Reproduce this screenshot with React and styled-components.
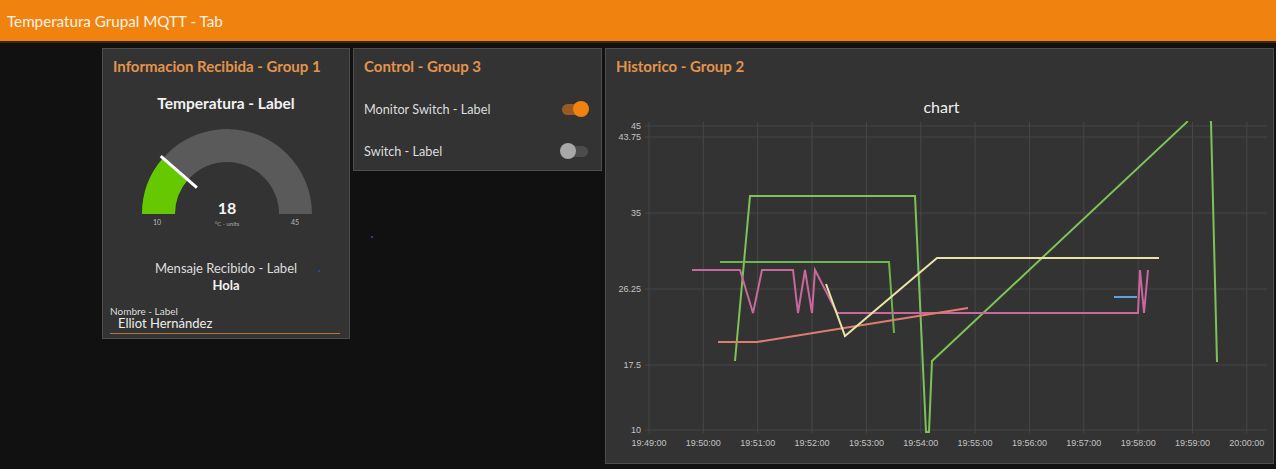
import React from "react";
import styled, { createGlobalStyle } from "styled-components";

const ORANGE = "#f0820f";
const TITLE_COLOR = "#e3944c";
const CARD_BG = "#333333";
const CARD_BORDER = "#4d4d4d";
const FONT = "Lato, 'Liberation Sans', sans-serif";

const GlobalStyle = createGlobalStyle`
    body {
        margin: 0;
        background: #111111;
        font-family: ${FONT};
        color: #dddddd;
    }
`;

const Page = styled.div`
    width: 1276px;
    height: 469px;
    overflow: hidden;
    position: relative;
`;

const Toolbar = styled.header`
    height: 41px;
    background: ${ORANGE};
    border-bottom: 2px solid #3b2612;
    display: flex;
    align-items: center;
    padding-left: 7px;
    font-size: 15.2px;
    color: #fff3e4;
`;

const Main = styled.main`
    display: flex;
    align-items: flex-start;
    gap: 3px;
    padding: 5px 0 0 102px;
`;

const Card = styled.section`
    position: relative;
    box-sizing: border-box;
    width: ${p => p.$w}px;
    height: ${p => p.$h}px;
    background: ${CARD_BG};
    border: 1px solid ${CARD_BORDER};
    display: flex;
    flex-direction: column;
`;

const CardTitle = styled.h2`
    margin: 0;
    height: 34px;
    flex: none;
    display: flex;
    align-items: center;
    padding-left: 10px;
    font-size: 15px;
    font-weight: 700;
    color: ${TITLE_COLOR};
`;

const WidgetLabel = styled.div`
    text-align: center;
    font-size: ${p => p.$size || 13}px;
    font-weight: ${p => (p.$bold ? 700 : 400)};
    color: ${p => (p.$bold ? "#f2f2f2" : "#dddddd")};
    line-height: 17px;
`;

const GaugeBox = styled.div`
    margin-top: 6px;
    height: 120px;
`;

const MessageBox = styled.div`
    margin-top: 22px;
    display: flex;
    flex-direction: column;
`;

const TextInput = styled.div`
    margin: 12px 9px 0 7px;
    border-bottom: 1px solid #b07840;
    padding-bottom: 3px;
`;

const InputLabel = styled.div`
    font-size: 10px;
    line-height: 10px;
    color: #dddddd;
`;

const InputValue = styled.div`
    font-size: 13px;
    line-height: 14px;
    padding-left: 8px;
    color: #eeeeee;
`;

const SwitchList = styled.div`
    padding-top: 5px;
    display: flex;
    flex-direction: column;
`;

const SwitchRow = styled.div`
    height: 42px;
    display: flex;
    align-items: center;
    justify-content: space-between;
    padding: 0 13px 0 10px;
    font-size: 12.7px;
    color: #dddddd;
`;

const Track = styled.div`
    position: relative;
    width: 26px;
    height: 11px;
    border-radius: 6px;
    background: ${p => (p.$on ? "#9a5a22" : "#4c4c4c")};
`;

const Thumb = styled.div`
    position: absolute;
    top: -2.5px;
    ${p => (p.$on ? "right: -1px;" : "left: -2px;")}
    width: 16px;
    height: 16px;
    border-radius: 50%;
    background: ${p => (p.$on ? ORANGE : "#a8a8a8")};
`;

const Speck = styled.span`
    position: absolute;
    left: ${p => p.$x}px;
    top: ${p => p.$y}px;
    width: 2px;
    height: 2px;
    border-radius: 1px;
    background: #2a4fc0;
`;

const ChartTitle = styled.div`
    box-sizing: border-box;
    height: 36px;
    padding: 10px 0 0 4px;
    display: flex;
    align-items: center;
    justify-content: center;
    font-size: 16px;
    color: #f0f0f0;
`;

function Switch({ label, on }) {
    return (
        <SwitchRow>
            <span>{label}</span>
            <Track $on={on}>
                <Thumb $on={on} />
            </Track>
        </SwitchRow>
    );
}

// gauge drawn in page coordinates, centre at (227, 214)
function Gauge() {
    const cx = 227, cy = 214, R = 85, r = 52;
    const frac = (18 - 10) / (45 - 10);
    const a = frac * Math.PI;
    const ox = cx - R * Math.cos(a), oy = cy - R * Math.sin(a);
    const ix = cx - r * Math.cos(a), iy = cy - r * Math.sin(a);
    const n1x = cx - 88 * Math.cos(a), n1y = cy - 88 * Math.sin(a);
    const n2x = cx - 40 * Math.cos(a), n2y = cy - 40 * Math.sin(a);
    return (
        <svg width="246" height="120" viewBox="103 118 246 120">
            <path d={`M ${cx - R} ${cy} A ${R} ${R} 0 0 1 ${cx + R} ${cy} L ${cx + r} ${cy} A ${r} ${r} 0 0 0 ${cx - r} ${cy} Z`} fill="#5a5a5a" />
            <path d={`M ${cx - R} ${cy} A ${R} ${R} 0 0 1 ${ox} ${oy} L ${ix} ${iy} A ${r} ${r} 0 0 0 ${cx - r} ${cy} Z`} fill="#66c800" />
            <line x1={n1x} y1={n1y} x2={n2x} y2={n2y} stroke="#ffffff" strokeWidth="3" />
            <text x={cx} y={cy} textAnchor="middle" fontSize="16" fontWeight="700" fill="#f4f4f4" fontFamily={FONT}>18</text>
            <text x={cx} y={cy + 12} textAnchor="middle" fontSize="6" fill="#aaaaaa" fontFamily={FONT}>°C - units</text>
            <text x={157} y={cy + 11} textAnchor="middle" fontSize="7" fill="#bbbbbb" fontFamily={FONT}>10</text>
            <text x={295} y={cy + 11} textAnchor="middle" fontSize="7" fill="#bbbbbb" fontFamily={FONT}>45</text>
        </svg>
    );
}

const X_TICKS = ["19:49:00", "19:50:00", "19:51:00", "19:52:00", "19:53:00", "19:54:00",
    "19:55:00", "19:56:00", "19:57:00", "19:58:00", "19:59:00", "20:00:00"];
const Y_TICKS = [[45, 126], [43.75, 137], [35, 213], [26.25, 289], [17.5, 365], [10, 430]];

const SERIES = [
    { color: "#7cc455", pts: [[735, 361], [750, 196], [915, 196], [926, 432], [929, 432], [932, 361], [1187, 122], [1199, 90], [1211, 122], [1217, 362]] },
    { color: "#6cb64c", pts: [[720, 262], [889, 262], [894, 333]] },
    { color: "#c8689c", pts: [[692, 270], [740, 270], [753, 313], [762, 270], [793, 270], [798, 313], [805, 270], [812, 313], [815, 270], [837, 313], [1138, 313], [1140, 270], [1144, 313], [1148, 270]] },
    { color: "#e07c72", pts: [[718, 342], [757, 342], [968, 308]] },
    { color: "#e9e4a6", pts: [[826, 284], [845, 336], [937, 258], [1159, 258]] },
    { color: "#5aa2e0", pts: [[1114, 297], [1137, 297]] },
];

// chart drawn in page coordinates (plot area 645..1267 x 122..432)
function LineChart() {
    const xAt = i => 649 + i * 54.35;
    return (
        <svg width="667" height="343" viewBox="606 119 667 343">
            <defs>
                <clipPath id="plot">
                    <rect x="645" y="121" width="622" height="312" />
                </clipPath>
            </defs>
            {Y_TICKS.map(([, y]) => (
                <line key={y} x1="645" x2="1267" y1={y} y2={y} stroke="#474747" strokeWidth="1" />
            ))}
            {X_TICKS.map((t, i) => (
                <line key={t} x1={xAt(i)} x2={xAt(i)} y1="122" y2="433" stroke="#474747" strokeWidth="1" />
            ))}
            {Y_TICKS.map(([v, y]) => (
                <text key={v} x="641" y={y + 3} textAnchor="end" fontSize="9" fill="#c4c4c4" fontFamily="'Liberation Sans', sans-serif">{v}</text>
            ))}
            {X_TICKS.map((t, i) => (
                <text key={t} x={xAt(i)} y="446" textAnchor="middle" fontSize="9" fill="#c4c4c4" fontFamily="'Liberation Sans', sans-serif">{t}</text>
            ))}
            <g clipPath="url(#plot)" fill="none" strokeWidth="2" strokeLinejoin="miter">
                {SERIES.map(s => (
                    <polyline key={s.color} points={s.pts.map(p => p.join(",")).join(" ")} stroke={s.color} />
                ))}
            </g>
        </svg>
    );
}

export default function App() {
    return (
        <Page>
            <GlobalStyle />
            <Toolbar>Temperatura Grupal MQTT - Tab</Toolbar>
            <Main>
                <Card $w={248} $h={291}>
                    <CardTitle>Informacion Recibida - Group 1</CardTitle>
                    <WidgetLabel $bold $size={15.5} style={{ marginTop: 12 }}>Temperatura - Label</WidgetLabel>
                    <GaugeBox>
                        <Gauge />
                    </GaugeBox>
                    <MessageBox>
                        <WidgetLabel>Mensaje Recibido - Label</WidgetLabel>
                        <WidgetLabel $bold>Hola</WidgetLabel>
                    </MessageBox>
                    <TextInput>
                        <InputLabel>Nombre - Label</InputLabel>
                        <InputValue>Elliot Hernández</InputValue>
                    </TextInput>
                    <Speck $x={215} $y={221} />
                </Card>
                <Card $w={249} $h={123}>
                    <CardTitle>Control - Group 3</CardTitle>
                    <SwitchList>
                        <Switch label="Monitor Switch - Label" on />
                        <Switch label="Switch - Label" />
                    </SwitchList>
                    <Speck $x={17} $y={187} />
                </Card>
                <Card $w={669} $h={416}>
                    <CardTitle>Historico - Group 2</CardTitle>
                    <ChartTitle>chart</ChartTitle>
                    <LineChart />
                </Card>
            </Main>
        </Page>
    );
}
